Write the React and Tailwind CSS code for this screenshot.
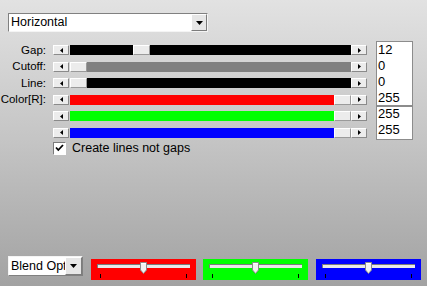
import React from 'react';

const font = { fontFamily: '"Liberation Sans", Arial, sans-serif' };

// small bevelled arrow button used at both ends of a scrollbar
function ArrowBtn({ dir }) {
  return (
    <div className="w-[16px] h-full flex items-center justify-center bg-[#ececec] border border-t-white border-l-white border-r-[#8a8a8a] border-b-[#8a8a8a]">
      <svg width="3" height="5" viewBox="0 0 3 5">
        {dir === 'left' ? (
          <path d="M3 0 L0 2.5 L3 5 Z" fill="#000" />
        ) : (
          <path d="M0 0 L3 2.5 L0 5 Z" fill="#000" />
        )}
      </svg>
    </div>
  );
}

function Thumb() {
  return (
    <div className="w-[17px] h-full shrink-0 bg-[#ececec] border border-t-white border-l-white border-r-[#9a9a9a] border-b-[#9a9a9a]" />
  );
}

function ScrollRow({ label, track, before }) {
  return (
    <div className="h-[16.5px] flex items-center">
      <div className="w-[47px] text-right text-[11.5px] text-black leading-none pr-[1px]">{label}</div>
      <div className="ml-[6px] w-[314px] h-[10px] flex">
        <ArrowBtn dir="left" />
        <div className="flex-1 flex ml-[1px]">
          {before === 'full' ? (
            <>
              <div className={`flex-1 ${track}`} />
              <Thumb />
            </>
          ) : (
            <>
              <div className={`${track}`} style={{ width: before }} />
              <Thumb />
              <div className={`flex-1 ${track}`} />
            </>
          )}
        </div>
        <ArrowBtn dir="right" />
      </div>
    </div>
  );
}

function DropArrow({ className }) {
  return (
    <div className={`flex items-center justify-center bg-[#e6e6e6] border border-t-white border-l-white border-r-[#7c7c7c] border-b-[#7c7c7c] ${className}`}>
      <svg width="7" height="4" viewBox="0 0 7 4">
        <path d="M0 0 H7 L3.5 4 Z" fill="#000" />
      </svg>
    </div>
  );
}

function ColorPanel({ bg, className }) {
  return (
    <div className={`relative w-[105px] h-[21px] ${bg} ${className}`}>
      <div className="absolute left-[6px] top-[5px] w-[93px] h-[4px] bg-[#e8e8e8] border-t border-l border-[#7a7a7a]" />
      <svg className="absolute left-[49px] top-[3px]" width="7" height="12" viewBox="0 0 7 12">
        <path d="M0.5 0.5 H6.5 V8 L3.5 11.5 L0.5 8 Z" fill="#f2f2f2" stroke="#8a8a8a" />
        <path d="M1 1 H6 V2 H1 Z" fill="#fff" />
      </svg>
      <div className="absolute left-[9px] top-[15px] w-[1px] h-[4px] bg-black" />
      <div className="absolute left-[95px] top-[15px] w-[1px] h-[4px] bg-black" />
    </div>
  );
}

export default function App() {
  const rows = [
    { label: 'Gap:', track: 'bg-black', before: '63px' },
    { label: 'Cutoff:', track: 'bg-[#808080]', before: '0px' },
    { label: 'Line:', track: 'bg-black', before: '0px' },
    { label: 'Color[R]:', track: 'bg-[#ff0000]', before: 'full' },
    { label: '', track: 'bg-[#00ff00]', before: 'full' },
    { label: '', track: 'bg-[#0000ff]', before: 'full' },
  ];

  return (
    <div style={font} className="w-[427px] h-[286px] flex flex-col bg-gradient-to-b from-[#e2e2e2] via-[#c4c4c4] to-[#a2a2a2] overflow-hidden">
      {/* Mode dropdown */}
      <div className="pt-[13px] pl-[8px]">
        <div className="w-[200px] h-[19px] flex bg-white border border-t-[#808080] border-l-[#808080] border-r-[#f4f4f4] border-b-[#f4f4f4]">
          <div className="flex-1 text-[12.5px] leading-[17px] pl-[2px] text-black">Horizontal</div>
          <DropArrow className="w-[16px] h-full" />
        </div>
      </div>

      {/* Sliders and values */}
      <div className="flex mt-[10px]">
        <div className="flex flex-col">
          {rows.map((r, i) => (
            <ScrollRow key={i} {...r} />
          ))}
        </div>
        <div className="ml-[9px] -mt-[1px] flex flex-col">
          <div className="w-[37px] h-[65px] bg-white border border-[#8c8c8c] text-[13px] leading-[16px] pl-[1px] text-black flex flex-col overflow-hidden">
            <span>12</span>
            <span>0</span>
            <span>0</span>
            <span>255</span>
          </div>
          <div className="w-[37px] h-[34px] bg-white border border-[#8c8c8c] text-[13px] leading-[16px] pl-[1px] text-black flex flex-col overflow-hidden">
            <span className="-mt-[1px]">255</span>
            <span>255</span>
          </div>
        </div>
      </div>

      {/* Checkbox */}
      <div className="flex items-center pl-[53px] -mt-[2px]">
        <div className="w-[13px] h-[13px] bg-white border border-t-[#7a7a7a] border-l-[#7a7a7a] border-r-white border-b-white flex items-center justify-center">
          <svg width="9" height="8" viewBox="0 0 9 8">
            <path d="M1 3.5 L3.3 6 L8 1" fill="none" stroke="#000" strokeWidth="1.8" />
          </svg>
        </div>
        <span className="ml-[6px] text-[12.5px] text-black">Create lines not gaps</span>
      </div>

      {/* Bottom controls */}
      <div className="mt-auto mb-[6px] pl-[8px] flex items-start">
        <div className="w-[75px] h-[20px] flex bg-white border border-t-[#f4f4f4] border-l-[#f4f4f4] border-r-[#808080] border-b-[#808080]">
          <div className="flex-1 overflow-hidden whitespace-nowrap text-[12.5px] leading-[18px] pl-[2px] text-black">Blend Optio</div>
          <DropArrow className="w-[17px] h-full" />
        </div>
        <ColorPanel bg="bg-[#ff0000]" className="ml-[8px] mt-[3px]" />
        <ColorPanel bg="bg-[#00ff00]" className="ml-[7px] mt-[3px]" />
        <ColorPanel bg="bg-[#0000ff]" className="ml-[8px] mt-[3px]" />
      </div>
    </div>
  );
}
